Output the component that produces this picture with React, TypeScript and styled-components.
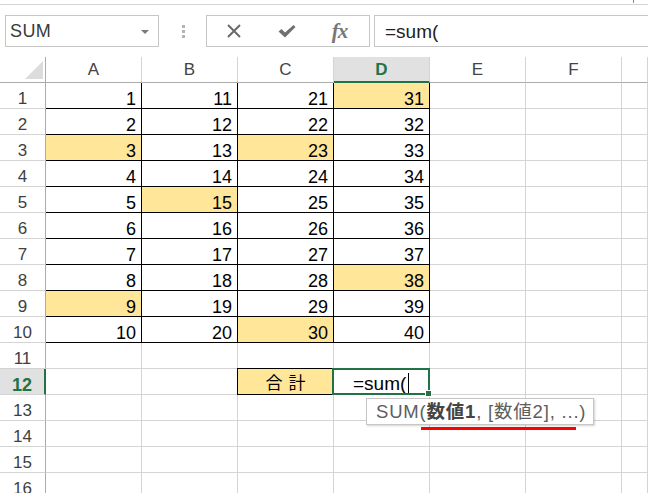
import React from "react";
import styled, { createGlobalStyle } from "styled-components";

const GlobalStyle = createGlobalStyle`
  html, body {
    margin: 0;
    padding: 0;
    background: #fff;
    overflow: hidden;
  }
  body {
    font-family: "Liberation Sans", "Noto Sans CJK JP", sans-serif;
    color: #000;
  }
`;

const CJK = `"Liberation Sans", "Noto Sans CJK JP", sans-serif`;

interface CellData {
  value?: string;
  fill?: boolean;
}

// table A1:D10, yellow cells marked
const highlights: { [key: string]: boolean } = {
  "A3": true,
  "A9": true,
  "B5": true,
  "C3": true,
  "C10": true,
  "D1": true,
  "D8": true,
};

const columns = ["A", "B", "C", "D", "E", "F"];

function cellFor(col: number, row: number): CellData {
  if (row <= 10 && col < 4) {
    return {
      value: String(col * 10 + row),
      fill: !!highlights[columns[col] + row],
    };
  }
  return {};
}

function App() {
  const rows = Array.from({ length: 16 }, (_, i) => i + 1);

  return (
    <>
      <GlobalStyle />
      <Page>
        <TopStrip>
          <TopMark />
        </TopStrip>

        <FormulaBar>
          <NameBox>
            <span>SUM</span>
            <DropArrow />
          </NameBox>

          <Grip>
            <Dot />
            <Dot />
            <Dot />
          </Grip>

          <ButtonGroup>
            <IconButton>
              <svg width="16" height="14" viewBox="0 0 16 14">
                <path
                  d="M2 1 L14 13 M14 1 L2 13"
                  stroke="#6a6a6a"
                  strokeWidth="2"
                  fill="none"
                />
              </svg>
            </IconButton>
            <IconButton>
              <svg width="18" height="13" viewBox="0 0 18 13">
                <path
                  d="M0.5 6.5 L3.5 4 L7 7.5 L15.5 0 L17.5 2 L7 12.5 Z"
                  fill="#707070"
                />
              </svg>
            </IconButton>
            <IconButton>
              <Fx>fx</Fx>
            </IconButton>
          </ButtonGroup>

          <FormulaInput>=sum(</FormulaInput>
        </FormulaBar>

        <Sheet>
          <Corner>
            <CornerTriangle />
          </Corner>
          {columns.map((c) => (
            <ColHeader key={c} $active={c === "D"}>
              {c}
            </ColHeader>
          ))}
          <ColHeader $active={false} />

          {rows.map((r) => (
            <React.Fragment key={r}>
              <RowHeader $active={r === 12}>{r}</RowHeader>
              {columns.map((c, ci) => {
                const data = cellFor(ci, r);
                if (r === 12 && c === "C") {
                  return <TotalCell key={c}>合計</TotalCell>;
                }
                if (r === 12 && c === "D") {
                  return (
                    <EditCell key={c}>
                      <span>=sum(</span>
                      <Caret />
                      <Selection>
                        <FillHandle />
                      </Selection>
                      <Tooltip>
                        SUM(<b>数値1</b>, [数値2], ...)
                      </Tooltip>
                      <Underline />
                    </EditCell>
                  );
                }
                return (
                  <Cell
                    key={c}
                    $fill={!!data.fill}
                    $boxed={r <= 10 && ci < 4}
                  >
                    {data.value}
                  </Cell>
                );
              })}
              <Cell $fill={false} $boxed={false} />
            </React.Fragment>
          ))}
        </Sheet>
      </Page>
    </>
  );
}

const Page = styled.div`
  width: 648px;
  height: 493px;
  overflow: hidden;
`;

const TopStrip = styled.div`
  height: 4px;
  border-bottom: 1px solid #d4d4d4;
  display: flex;
  justify-content: flex-end;
`;

const TopMark = styled.div`
  width: 1px;
  height: 3px;
  background: #8a8a8a;
  margin-right: 14px;
`;

const FormulaBar = styled.div`
  display: flex;
  align-items: stretch;
  height: 32px;
  padding: 10px 0 0 5px;
`;

const NameBox = styled.div`
  box-sizing: border-box;
  width: 154px;
  border: 1px solid #c6c6c6;
  display: flex;
  align-items: center;
  justify-content: space-between;
  padding: 1px 9px 0 4px;
  font-size: 18px;
  color: #3a3a3a;
  letter-spacing: 0.4px;
`;

const DropArrow = styled.div`
  width: 0;
  height: 0;
  border-left: 4px solid transparent;
  border-right: 4px solid transparent;
  border-top: 4px solid #7a7a7a;
`;

const Grip = styled.div`
  width: 45px;
  display: flex;
  flex-direction: column;
  align-items: center;
  justify-content: center;
  gap: 2px;
  padding-left: 2px;
`;

const Dot = styled.div`
  width: 3px;
  height: 3px;
  background: #b4b4b4;
`;

const ButtonGroup = styled.div`
  box-sizing: border-box;
  width: 164px;
  border: 1px solid #c6c6c6;
  display: flex;
  align-items: center;
  padding-left: 0;
`;

const IconButton = styled.div`
  width: 53px;
  display: flex;
  align-items: center;
  justify-content: center;
`;

const Fx = styled.span`
  font-family: "Liberation Serif", serif;
  font-style: italic;
  font-weight: bold;
  font-size: 21px;
  color: #777;
  letter-spacing: -1px;
`;

const FormulaInput = styled.div`
  box-sizing: border-box;
  flex: 1;
  margin-left: 4px;
  border: 1px solid #c6c6c6;
  border-right: none;
  display: flex;
  align-items: center;
  padding: 2px 0 0 10px;
  font-size: 19px;
  color: #222;
`;

const Sheet = styled.div`
  margin-top: 10px;
  display: grid;
  grid-template-columns: 46px repeat(6, 96px) 1fr;
  grid-auto-rows: 26px;
  font-family: ${CJK};
`;

const HeaderBase = styled.div`
  box-sizing: border-box;
  display: flex;
  align-items: center;
  justify-content: center;
  font-size: 17px;
  color: #444;
`;

const Corner = styled(HeaderBase)`
  border-right: 1px solid #ababab;
  border-bottom: 1px solid #ababab;
  align-items: flex-end;
  justify-content: flex-end;
`;

const CornerTriangle = styled.div`
  width: 18px;
  height: 18px;
  margin: 0 2px 3px 0;
  background: #dcdcdc;
  clip-path: polygon(100% 0, 100% 100%, 0 100%);
`;

const ColHeader = styled(HeaderBase)<{ $active: boolean }>`
  padding-top: 1px;
  border-right: 1px solid #d4d4d4;
  border-bottom: ${(p) => (p.$active ? "2px solid #217346" : "1px solid #ababab")};
  background: ${(p) => (p.$active ? "#e1e1e1" : "#fff")};
  color: ${(p) => (p.$active ? "#217346" : "#444")};
  font-weight: ${(p) => (p.$active ? "bold" : "normal")};
`;

const RowHeader = styled(HeaderBase)<{ $active: boolean }>`
  align-items: flex-end;
  line-height: 16px;
  padding-bottom: 1px;
  border-right: ${(p) => (p.$active ? "2px solid #217346" : "1px solid #ababab")};
  border-bottom: 1px solid #d4d4d4;
  background: ${(p) => (p.$active ? "#e1e1e1" : "#fff")};
  color: ${(p) => (p.$active ? "#217346" : "#3f3f3f")};
  font-weight: ${(p) => (p.$active ? "bold" : "normal")};
  font-size: ${(p) => (p.$active ? "18px" : "17px")};
`;

const Cell = styled.div<{ $fill: boolean; $boxed: boolean }>`
  box-sizing: border-box;
  display: flex;
  align-items: flex-end;
  justify-content: flex-end;
  padding: 0 5px 1px 0;
  font-size: 18px;
  line-height: 16px;
  color: #000;
  background: ${(p) => (p.$fill ? "#ffe699" : "#fff")};
  border-right: 1px solid ${(p) => (p.$boxed ? "#000" : "#d4d4d4")};
  border-bottom: 1px solid ${(p) => (p.$boxed ? "#000" : "#d4d4d4")};
`;

const TotalCell = styled(Cell).attrs({ $fill: true, $boxed: true })`
  justify-content: center;
  letter-spacing: 6px;
  padding: 0 0 2px 6px;
  font-size: 17px;
  box-shadow: 0 -1px 0 #000, -1px 0 0 #000, -1px -1px 0 #000;
`;

const EditCell = styled(Cell).attrs({ $fill: false, $boxed: false })`
  position: relative;
  z-index: 2;
  justify-content: flex-start;
  padding: 0 0 2px 19px;
  font-size: 19px;
  overflow: visible;
`;

const Caret = styled.div`
  width: 1px;
  height: 20px;
  background: #000;
  margin: 0 0 -1px 2px;
  align-self: flex-end;
`;

const Selection = styled.div`
  position: absolute;
  left: -2px;
  top: -1px;
  right: -1px;
  bottom: -1px;
  border: 2px solid #217346;
  pointer-events: none;
`;

const FillHandle = styled.div`
  position: absolute;
  right: -4px;
  bottom: -4px;
  width: 5px;
  height: 5px;
  background: #217346;
  border: 1px solid #fff;
`;

const Tooltip = styled.div`
  position: absolute;
  left: 32px;
  top: 29px;
  box-sizing: border-box;
  width: 228px;
  height: 27px;
  display: flex;
  align-items: center;
  white-space: nowrap;
  padding: 1px 0 0 9px;
  background: #fff;
  border: 1px solid #c6c6c6;
  box-shadow: 1px 1px 2px rgba(0, 0, 0, 0.18);
  font-size: 18.5px;
  line-height: 20px;
  color: #5e5e5e;
  letter-spacing: 0.8px;

  b {
    color: #444;
  }
`;

const Underline = styled.div`
  position: absolute;
  left: 87px;
  top: 58px;
  width: 155px;
  height: 3px;
  background: #ff0000;
`;

export default App;
